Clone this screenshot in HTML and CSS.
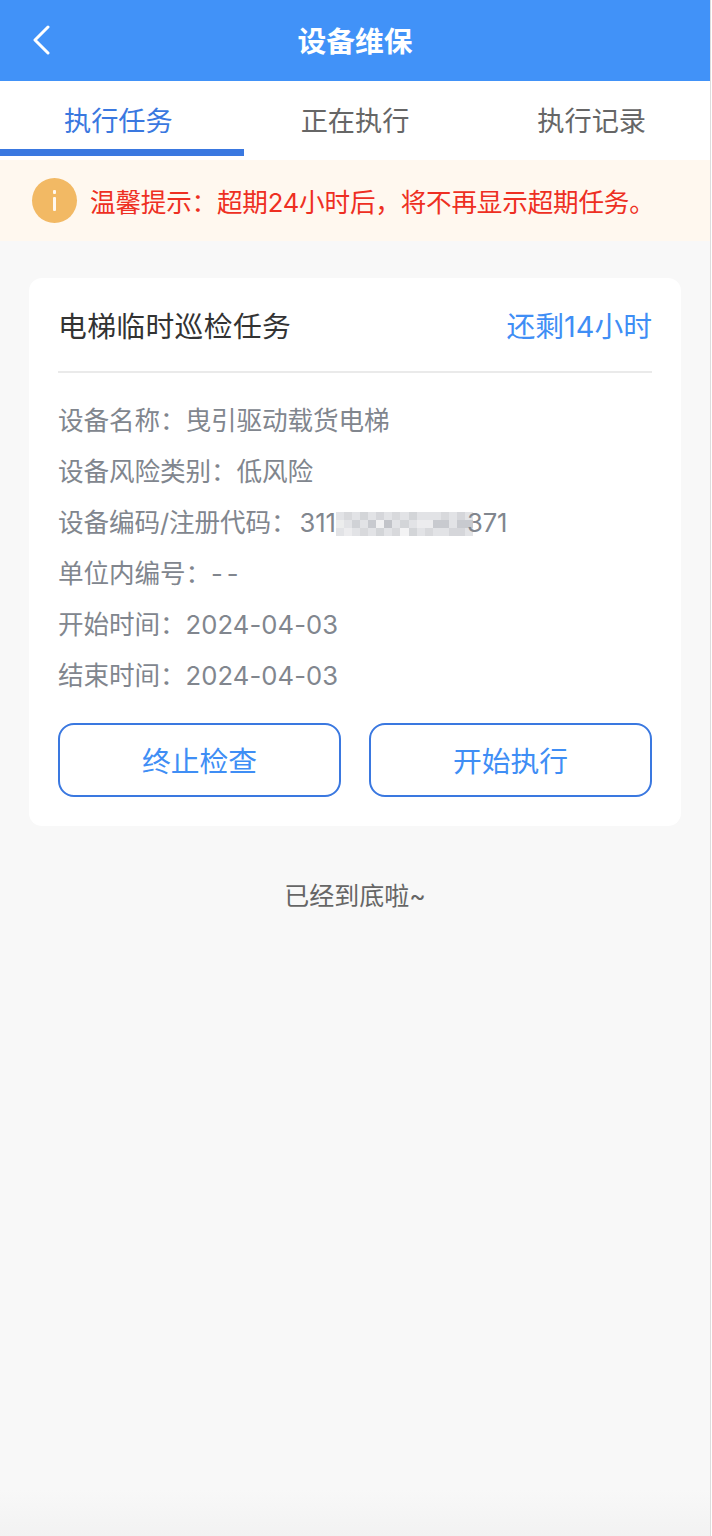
FILE: index.html
```html
<!DOCTYPE html>
<html lang="zh-CN">
<head>
    <meta charset="UTF-8">
    <meta name="viewport" content="width=device-width, initial-scale=1.0">
    <title>设备维保</title>
    <link rel="stylesheet" href="styles.css">
</head>
<body>
    <!-- Header -->
    <header class="top-bar">
        <svg class="back-icon" width="20" height="30" viewBox="0 0 20 30" fill="none">
            <path d="M17 2 L4 15 L17 28" stroke="#fff" stroke-width="3" stroke-linecap="round" stroke-linejoin="round"/>
        </svg>
        <h1 class="top-title">设备维保</h1>
    </header>

    <!-- Tabs -->
    <nav class="tabs">
        <a class="tab tab-active">执行任务</a>
        <a class="tab">正在执行</a>
        <a class="tab">执行记录</a>
    </nav>

    <!-- Notice -->
    <div class="notice">
        <span class="notice-icon"><span class="notice-dot"></span><span class="notice-stem"></span></span>
        <span class="notice-text">温馨提示：超期24小时后，将不再显示超期任务。</span>
    </div>

    <!-- Task card -->
    <section class="card">
        <div class="card-head">
            <span class="card-title">电梯临时巡检任务</span>
            <span class="card-time">还剩14小时</span>
        </div>
        <ul class="info-list">
            <li>设备名称：曳引驱动载货电梯</li>
            <li>设备风险类别：低风险</li>
            <li>设备编码/注册代码：<span class="code-value">311</span><svg class="mosaic" width="137" height="24" viewBox="0 0 17 3" preserveAspectRatio="none" shape-rendering="crispEdges">
                <rect width="17" height="3" fill="#e2e3e6"/>
                <rect x="1" y="0" width="1" height="1" fill="#d8d9dc"/>
                <rect x="3" y="0" width="1" height="1" fill="#d3d5d8"/>
                <rect x="5" y="0" width="1" height="1" fill="#d5d6da"/>
                <rect x="7" y="0" width="1" height="1" fill="#d8d9dc"/>
                <rect x="9" y="0" width="1" height="1" fill="#d3d5d8"/>
                <rect x="13" y="0" width="1" height="1" fill="#d8d9dc"/>
                <rect x="15" y="0" width="1" height="1" fill="#d5d6da"/>
                <rect x="0" y="1" width="1" height="1" fill="#eceded"/>
                <rect x="2" y="1" width="1" height="1" fill="#d0d2d6"/>
                <rect x="4" y="1" width="1" height="1" fill="#c8cacf"/>
                <rect x="5" y="1" width="1" height="1" fill="#f1f1f2"/>
                <rect x="6" y="1" width="1" height="1" fill="#c2c4c9"/>
                <rect x="8" y="1" width="1" height="1" fill="#d3d5d8"/>
                <rect x="10" y="1" width="2" height="1" fill="#ececee"/>
                <rect x="12" y="1" width="2" height="1" fill="#c8cacf"/>
                <rect x="15" y="1" width="2" height="1" fill="#c8cacf"/>
                <rect x="1" y="2" width="1" height="1" fill="#ececee"/>
                <rect x="3" y="2" width="1" height="1" fill="#d8d9dc"/>
                <rect x="5" y="2" width="1" height="1" fill="#d3d5d8"/>
                <rect x="7" y="2" width="1" height="1" fill="#d8d9dc"/>
                <rect x="8" y="2" width="1" height="1" fill="#f3f3f4"/>
                <rect x="9" y="2" width="1" height="1" fill="#d3d5d8"/>
                <rect x="11" y="2" width="1" height="1" fill="#d8d9dc"/>
                <rect x="14" y="2" width="2" height="1" fill="#d5d6da"/>
            </svg><span class="mosaic-after">371</span></li>
            <li>单位内编号：<span class="dash">--</span></li>
            <li>开始时间：<span class="date">2024-04-03</span></li>
            <li>结束时间：<span class="date">2024-04-03</span></li>
        </ul>
        <div class="card-actions">
            <button class="action-btn">终止检查</button>
            <button class="action-btn">开始执行</button>
        </div>
    </section>

    <p class="list-end">已经到底啦~</p>
</body>
</html>
```

FILE: styles.css
```css
html, body {
    margin: 0;
    padding: 0;
}
html {
    background-color: #fff;
}
body {
    width: 710px;
    height: 1536px;
    overflow: hidden;
    font-family: Inter, "Noto Sans CJK SC", sans-serif;
    background: linear-gradient(#f8f8f8 1490px, #f2f2f2 1536px);
    border-right: 1px solid #ddd;
    color: #333;
}
.top-bar {
    height: 81px;
    background-color: #4192f8;
    display: flex;
    align-items: center;
    justify-content: center;
    position: relative;
}
.back-icon {
    position: absolute;
    left: 31px;
    top: 25px;
}
.top-title {
    margin: 0 0 3px;
    font-size: 28.8px;
    font-weight: 700;
    color: #fff;
}
.tabs {
    height: 79px;
    background-color: #fff;
    display: flex;
}
.tab {
    flex: 1;
    height: 75px;
    line-height: 82px;
    text-align: center;
    font-size: 27.2px;
    color: #666;
}
.tab-active {
    color: #3a78e0;
    position: relative;
}
.tab-active::after {
    content: "";
    position: absolute;
    left: 0;
    bottom: 0;
    width: 244px;
    height: 7px;
    background-color: #3a78e0;
}
.notice {
    height: 81px;
    background-color: #fff8ef;
    display: flex;
    align-items: center;
    padding-left: 32px;
    gap: 13px;
}
.notice-icon {
    width: 45px;
    height: 45px;
    border-radius: 50%;
    background-color: #f2b964;
    display: flex;
    flex-direction: column;
    align-items: center;
    justify-content: center;
    gap: 3px;
}
.notice-dot {
    width: 3px;
    height: 4px;
    border-radius: 1px;
    background-color: #fff8ef;
}
.notice-stem {
    width: 3px;
    height: 14px;
    border-radius: 1px;
    background-color: #fff8ef;
}
.notice-text {
    font-size: 25.6px;
    letter-spacing: -0.2px;
    color: #ee2f22;
    white-space: nowrap;
}
.card {
    margin: 37px 29px 0;
    height: 548px;
    box-sizing: border-box;
    padding: 0 29px;
    background-color: #fff;
    border-radius: 13px;
}
.card-head {
    height: 93px;
    display: flex;
    align-items: center;
    justify-content: space-between;
    border-bottom: 2px solid #eaeaea;
    font-size: 28.8px;
}
.card-title {
    color: #333;
    letter-spacing: 0.35px;
}
.card-time {
    color: #3f8ef5;
}
.info-list {
    list-style: none;
    margin: 0;
    padding: 22px 0 0;
    font-size: 25.6px;
    letter-spacing: -0.1px;
    color: #81868e;
}
.info-list li {
    height: 51px;
    line-height: 51px;
    white-space: nowrap;
}
.code-value {
    margin-left: 3px;
}
.mosaic {
    display: inline-block;
    vertical-align: -4px;
}
.mosaic-after {
    margin-left: -6px;
}
.dash {
    letter-spacing: 4px;
}
.date {
    letter-spacing: 0.1px;
}
.card-actions {
    display: flex;
    justify-content: space-between;
    margin-top: 22px;
}
.action-btn {
    width: 283px;
    height: 74px;
    background-color: #fff;
    border: 2px solid #3a78e0;
    border-radius: 16px;
    font-family: inherit;
    font-size: 28.8px;
    color: #3f8ef5;
    padding: 0 0 2px;
}
.list-end {
    margin: 52px 0 0;
    text-align: center;
    font-size: 25px;
    line-height: 36px;
    color: #666;
}
```
